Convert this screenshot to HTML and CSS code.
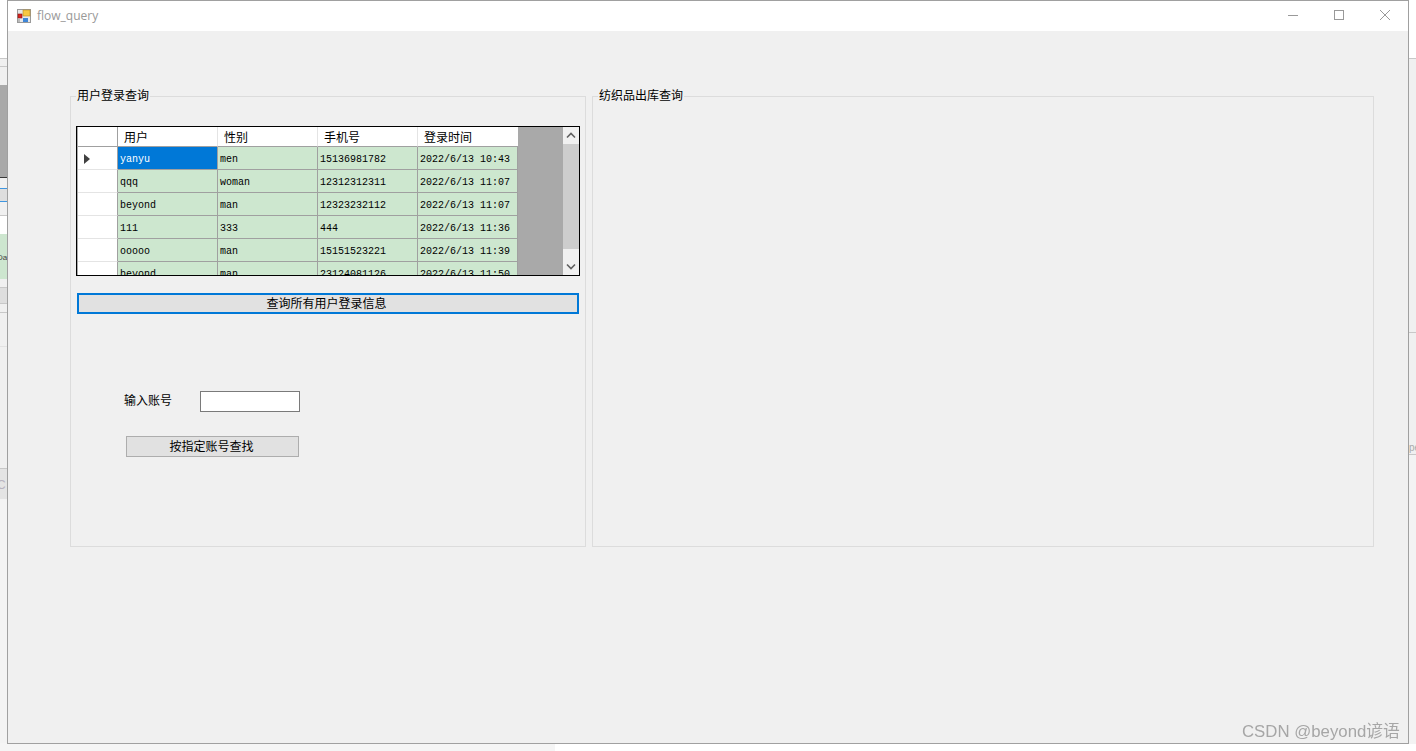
FILE: index.html
```html
<!DOCTYPE html>
<html lang="zh-CN">
<head>
<meta charset="utf-8">
<title>flow_query</title>
<link rel="stylesheet" href="styles.css">
</head>
<body>
<div class="desktop">
  <div class="strip strip-left">
    <div class="s s-white h58"></div><div class="s s-line"></div><div class="s s-pale h7"></div><div class="s s-line"></div>
    <div class="s s-pale h18"></div><div class="s s-dark h92"></div><div class="s s-black"></div>
    <div class="s s-pale h10"></div><div class="s s-blue"></div><div class="s s-band h12"></div><div class="s s-blue"></div>
    <div class="s s-pale h13"></div><div class="s s-line"></div><div class="s s-white h18"></div>
    <div class="s s-green h45"><span class="frag">Da</span></div>
    <div class="s s-pale h8"></div><div class="s s-line"></div><div class="s s-band h15"></div><div class="s s-line"></div>
    <div class="s s-pale h8"></div><div class="s s-line"></div><div class="s s-pale h33"></div><div class="s s-faint"></div>
    <div class="s s-pale h121"></div><div class="s s-line"></div><div class="s s-band2 h30"><span class="frag frag-c">C</span></div>
  </div>
  <div class="strip strip-right">
    <div class="s s-white h58"></div><div class="s s-line"></div><div class="s s-pale h273"></div><div class="s s-line"></div>
    <div class="s s-pale h121"><span class="frag frag-pe">pe</span></div><div class="s s-line"></div>
  </div>
  <div class="strip-bottom"></div>

  <main class="window">
    <header class="titlebar">
      <svg class="app-icon" width="14" height="15" viewBox="0 0 14 15" aria-hidden="true">
        <rect x="0.5" y="0.5" width="13" height="13" fill="#e8e8e8" stroke="#9a9a9a"/>
        <rect x="6" y="1" width="7" height="6" fill="#f7c843" stroke="#b98a1e" stroke-width="0.6"/>
        <rect x="1" y="5" width="4" height="4" fill="#d8231f" stroke="#8c1512" stroke-width="0.6"/>
        <rect x="6" y="9" width="5" height="4" fill="#3e86d8"/>
        <rect x="1" y="10" width="2" height="3" fill="#bbb"/>
      </svg>
      <span class="title">flow_query</span>
      <div class="caption">
        <svg class="cap" width="46" height="30" viewBox="0 0 46 30" aria-hidden="true"><path d="M18 14.5H28" stroke="#999" fill="none"/></svg>
        <svg class="cap" width="46" height="30" viewBox="0 0 46 30" aria-hidden="true"><rect x="18.5" y="9.5" width="9" height="9" stroke="#999" fill="none"/></svg>
        <svg class="cap" width="46" height="30" viewBox="0 0 46 30" aria-hidden="true"><path d="M18 9L28 19M28 9L18 19" stroke="#999" fill="none"/></svg>
      </div>
    </header>
    <div class="client">
      <section class="group group-left">
        <h2 class="legend">用户登录查询</h2>
        <div class="grid">
          <div class="grid-table">
            <div class="row head">
              <div class="rh"></div><div class="hc">用户</div><div class="hc">性别</div><div class="hc">手机号</div><div class="hc">登录时间</div>
            </div>
            <div class="row">
              <div class="rh"><span class="arrow"></span></div><div class="c sel">yanyu</div><div class="c">men</div><div class="c">15136981782</div><div class="c">2022/6/13 10:43</div>
            </div>
            <div class="row">
              <div class="rh"></div><div class="c">qqq</div><div class="c">woman</div><div class="c">12312312311</div><div class="c">2022/6/13 11:07</div>
            </div>
            <div class="row">
              <div class="rh"></div><div class="c">beyond</div><div class="c">man</div><div class="c">12323232112</div><div class="c">2022/6/13 11:07</div>
            </div>
            <div class="row">
              <div class="rh"></div><div class="c">111</div><div class="c">333</div><div class="c">444</div><div class="c">2022/6/13 11:36</div>
            </div>
            <div class="row">
              <div class="rh"></div><div class="c">ooooo</div><div class="c">man</div><div class="c">15151523221</div><div class="c">2022/6/13 11:39</div>
            </div>
            <div class="row">
              <div class="rh"></div><div class="c">beyond</div><div class="c">man</div><div class="c">23124081126</div><div class="c">2022/6/13 11:50</div>
            </div>
          </div>
          <div class="filler"></div>
          <div class="scrollbar">
            <svg class="sb-btn" width="16" height="17" viewBox="0 0 16 17" aria-hidden="true"><path d="M4 10.5L8 6.5L12 10.5" stroke="#606060" stroke-width="1.6" fill="none"/></svg>
            <div class="thumb"></div>
            <svg class="sb-btn sb-end" width="16" height="17" viewBox="0 0 16 17" aria-hidden="true"><path d="M4 6.5L8 10.5L12 6.5" stroke="#606060" stroke-width="1.6" fill="none"/></svg>
          </div>
        </div>
        <button class="btn btn-all" type="button">查询所有用户登录信息</button>
        <div class="field">
          <label class="field-label">输入账号</label>
          <input class="field-input" type="text">
        </div>
        <button class="btn btn-find" type="button">按指定账号查找</button>
      </section>
      <section class="group group-right">
        <h2 class="legend">纺织品出库查询</h2>
      </section>
    </div>
  </main>
  <div class="watermark">CSDN @beyond谚语</div>
</div>
</body>
</html>
```
FILE: styles.css
```css
* { box-sizing: border-box; }
html, body { margin: 0; padding: 0; }
body {
  width: 1416px;
  height: 751px;
  overflow: hidden;
  background: #fff;
  font-family: "Noto Sans CJK SC", "Liberation Sans", sans-serif;
  font-size: 12px;
  color: #000;
}
.desktop { position: relative; width: 1416px; height: 751px; overflow: hidden; }

/* Background windows peeking out behind the form */
.strip { position: absolute; top: 0; width: 8px; display: flex; flex-direction: column; overflow: hidden; }
.strip-left { left: 0; }
.strip-right { right: 0; }
.strip-bottom { position: absolute; left: 0; bottom: 0; width: 555px; height: 8px; background: #f5f5f5; }
.strip-left, .strip-right { height: 744px; background: #f3f3f3; }
.s { flex: none; height: 1px; position: relative; }
.s-white { background: #fff; }
.s-pale { background: #f0f0f0; }
.s-line { background: #c8c8c8; }
.s-faint { background: #e2e2e2; }
.s-dark { background: #a9a9a9; }
.s-black { background: #3a3a3a; }
.s-blue { background: #3e96e0; }
.s-band { background: #dedede; }
.s-band2 { background: #e4e4e4; }
.s-green { background: #cde6cf; }
.h7 { height: 7px; } .h8 { height: 8px; } .h10 { height: 10px; } .h12 { height: 12px; } .h13 { height: 13px; }
.h15 { height: 15px; } .h18 { height: 18px; } .h30 { height: 30px; } .h33 { height: 33px; } .h45 { height: 45px; }
.h58 { height: 58px; } .h92 { height: 92px; } .h121 { height: 121px; } .h273 { height: 273px; }
.frag { position: absolute; left: -3px; top: 19px; font: 8px/10px "Liberation Sans", sans-serif; color: #444; }
.frag-c { left: -3px; top: 9px; font-size: 12px; line-height: 14px; color: #b9b4c0; }
.frag-pe { left: 1px; top: 109px; font-size: 10px; line-height: 12px; color: #aaa; }

/* Form window */
.window {
  position: absolute;
  left: 7px;
  top: 0;
  width: 1402px;
  height: 744px;
  border: 1px solid #a0a0a0;
  background: #f0f0f0;
  display: flex;
  flex-direction: column;
}
.titlebar {
  flex: none;
  height: 30px;
  background: #fff;
  display: flex;
  align-items: center;
  padding-left: 9px;
}
.app-icon { flex: none; margin-right: 6px; }
.title { font: 12px/16px "Open Sans", sans-serif; color: #999; }
.caption { margin-left: auto; display: flex; }
.cap { display: block; }

.client { flex: 1; display: flex; gap: 6px; padding: 65px 0 0 62px; align-items: flex-start; }
.group { position: relative; height: 451px; border: 1px solid #dcdcdc; flex: none; }
.group-left { width: 516px; padding: 29px 0 0 5px; }
.group-right { width: 782px; }
.legend {
  position: absolute;
  left: 5px;
  top: -10px;
  margin: 0;
  padding: 0 1px;
  background: #f0f0f0;
  font-weight: 400;
  font-size: 12px;
  line-height: 16px;
}

/* Data grid */
.grid {
  width: 504px;
  height: 150px;
  border: 1px solid #000;
  padding-left: 1px;
  background: #a9a9a9;
  display: flex;
  overflow: hidden;
}
.grid-table { flex: none; width: 440px; }
.filler { flex: none; width: 45px; }
.scrollbar { flex: none; width: 16px; background: #f0f0f0; display: flex; flex-direction: column; }
.sb-btn { display: block; flex: none; }
.sb-end { margin-top: auto; }
.thumb { flex: none; height: 105px; background: #cdcdcd; }
.row { display: grid; grid-template-columns: 40px repeat(4, 100px); grid-template-rows: 23px; height: 23px; }
.row.head { grid-template-rows: 20px; height: 20px; }
.rh { background: #fff; border-right: 1px solid #a0a0a0; border-bottom: 1px solid #e4e4e4; display: flex; align-items: center; padding-left: 6px; }
.head .rh { border-bottom-color: #a0a0a0; }
.arrow { width: 0; height: 0; border-left: 6px solid #404040; border-top: 5px solid transparent; border-bottom: 5px solid transparent; margin-top: 2px; }
.hc {
  background: #fff;
  border-right: 1px solid #e4e4e4;
  border-bottom: 1px solid #a0a0a0;
  padding-left: 6px;
  font-size: 12px;
  line-height: 19px;
}
.hc:last-child { border-right: 0; }
.c {
  background: #cde7cf;
  border-right: 1px solid #a0a0a0;
  border-bottom: 1px solid #a0a0a0;
  padding: 3px 0 0 2px;
  font-family: "Liberation Mono", monospace;
  font-size: 10px;
  line-height: 19px;
  white-space: nowrap;
  overflow: hidden;
}
.c.sel { background: #0078d7; color: #fff; }

/* Buttons and inputs */
.btn {
  display: block;
  margin: 0;
  background: #e1e1e1;
  color: #000;
  font-family: inherit;
  font-size: 12px;
  line-height: 16px;
  text-align: center;
}
.btn-all { width: 502px; height: 21px; margin: 17px 0 0 1px; border: 2px solid #0078d7; padding: 0 3px 2px 0; }
.btn-find { width: 173px; height: 21px; margin: 24px 0 0 50px; border: 1px solid #adadad; padding: 0 2px 2px 0; }
.field { display: flex; align-items: center; margin: 77px 0 0 48px; }
.field-label { flex: none; width: 76px; font-size: 12px; line-height: 16px; margin-top: -3px; }
.field-input { flex: none; width: 100px; height: 21px; padding: 0; border: 1px solid #7a7a7a; background: #fff; }

.watermark {
  position: absolute;
  left: 1242px;
  top: 721px;
  font-family: "Liberation Sans", "Noto Sans CJK SC", sans-serif;
  font-size: 16.8px;
  line-height: 22px;
  color: #a6a6a6;
  white-space: nowrap;
  filter: blur(0.3px);
}
```
